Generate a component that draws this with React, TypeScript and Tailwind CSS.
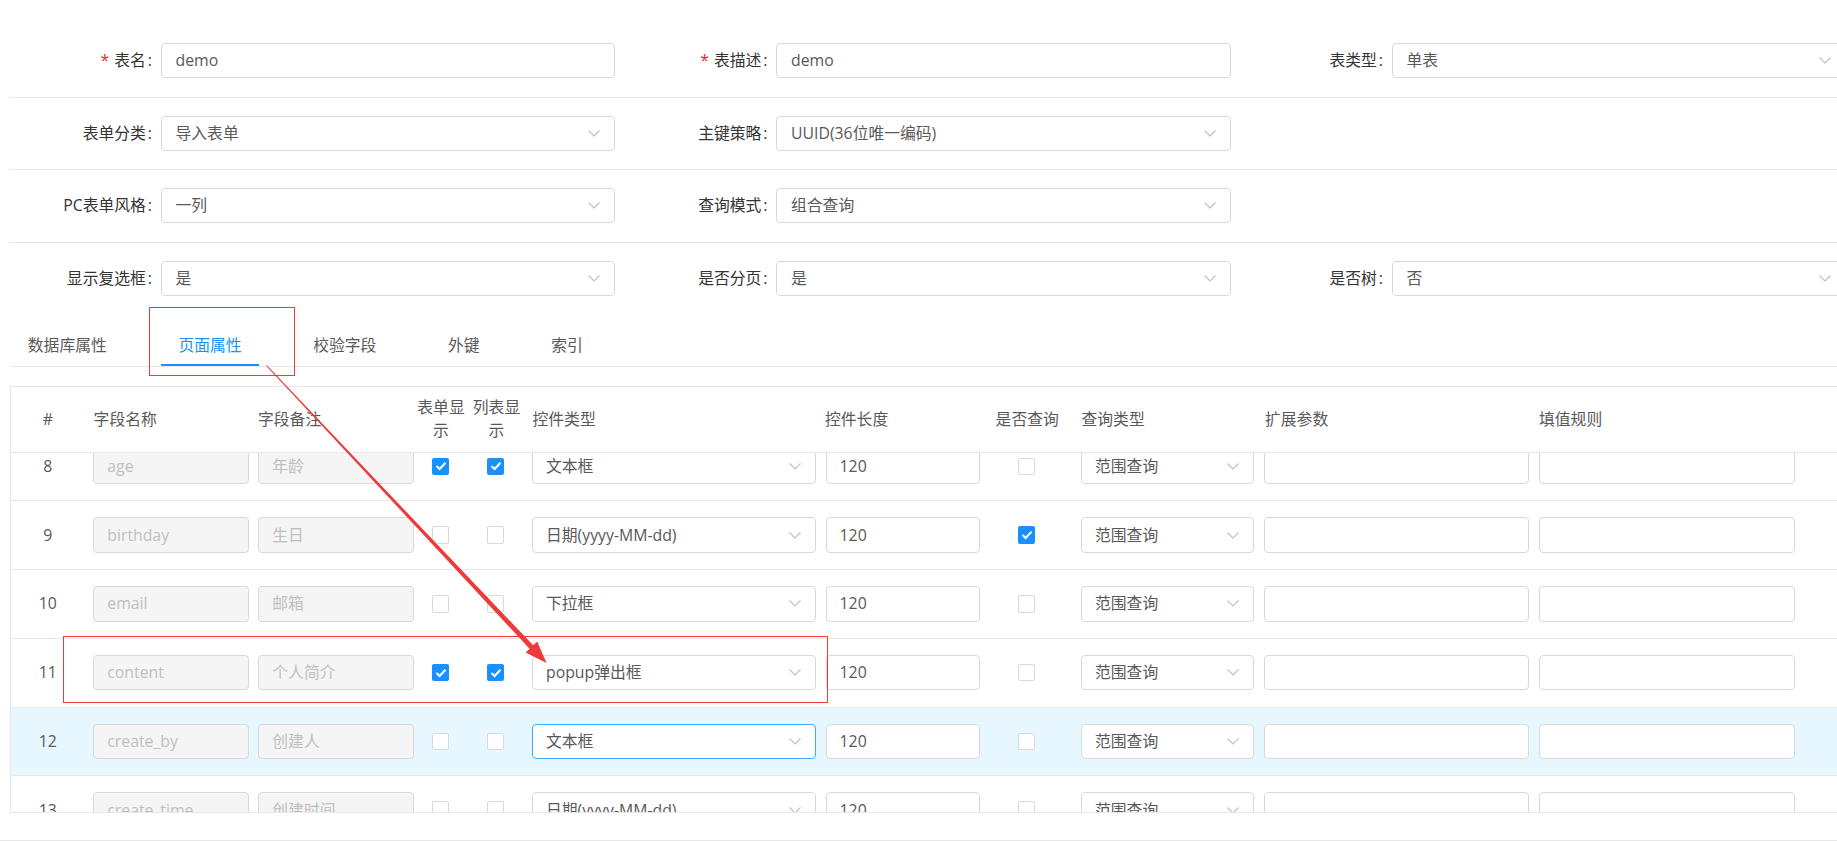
import React from "react";

type Row = {
	no: number;
	name: string;
	remark: string;
	formShow: boolean;
	listShow: boolean;
	ctrl: string;
	len: string;
	query: boolean;
	queryType: string;
	active?: boolean;
};

const rows: Row[] = [
	{ no: 8, name: "age", remark: "年龄", formShow: true, listShow: true, ctrl: "文本框", len: "120", query: false, queryType: "范围查询" },
	{ no: 9, name: "birthday", remark: "生日", formShow: false, listShow: false, ctrl: "日期(yyyy-MM-dd)", len: "120", query: true, queryType: "范围查询" },
	{ no: 10, name: "email", remark: "邮箱", formShow: false, listShow: false, ctrl: "下拉框", len: "120", query: false, queryType: "范围查询" },
	{ no: 11, name: "content", remark: "个人简介", formShow: true, listShow: true, ctrl: "popup弹出框", len: "120", query: false, queryType: "范围查询" },
	{ no: 12, name: "create_by", remark: "创建人", formShow: false, listShow: false, ctrl: "文本框", len: "120", query: false, queryType: "范围查询", active: true },
	{ no: 13, name: "create_time", remark: "创建时间", formShow: false, listShow: false, ctrl: "日期(yyyy-MM-dd)", len: "120", query: false, queryType: "范围查询" },
];

const Chevron = () => (
	<svg width="12" height="7" viewBox="0 0 12 7" className="shrink-0">
		<polyline points="0.5,0.5 6,6 11.5,0.5" fill="none" stroke="#bfbfbf" strokeWidth="1.1" />
	</svg>
);

const Checkbox = ({ checked }: { checked: boolean }) =>
	checked ? (
		<div className="flex h-[17.5px] w-[17.5px] items-center justify-center rounded-[2px] bg-[#1890ff]">
			<svg width="12" height="10" viewBox="0 0 12 10">
				<polyline points="1.5,5 4.6,8 10.5,1.8" fill="none" stroke="#fff" strokeWidth="2" />
			</svg>
		</div>
	) : (
		<div className="h-[17.5px] w-[17.5px] rounded-[2px] border border-[#d9d9d9] bg-white" />
	);

// top form field
const FormItem = ({
	label,
	value,
	required,
	select,
}: {
	label?: string;
	value?: string;
	required?: boolean;
	select?: boolean;
}) => {
	if (!label) return <div className="w-[615.5px] shrink-0" />;
	return (
		<div className="flex w-[615.5px] shrink-0 items-center">
			<label className="w-[143px] shrink-0 text-right text-[#333]">
				{required && <span className="mr-[5px] text-[#f5222d]">*</span>}
				{label}
				<span className="ml-[2px]">:</span>
			</label>
			<div className="ml-[8.5px] flex h-[35.4px] w-[454.5px] items-center rounded-[4px] border border-[#d9d9d9] pl-[14px] pr-[14px] text-[#595959]">
				<span className="flex-1">{value}</span>
				{select && <Chevron />}
			</div>
		</div>
	);
};

const DisabledInput = ({ value }: { value: string }) => (
	<div className="flex h-[35.4px] w-full items-center rounded-[4px] border border-[#d9d9d9] bg-[#f5f5f5] pl-[13px] text-[#bfbfbf]">
		{value}
	</div>
);

const Select = ({ value, focused }: { value: string; focused?: boolean }) => (
	<div
		className={
			focused
				? "flex h-[35.4px] w-full items-center rounded-[4px] border border-[#40a9ff] bg-white pl-[13px] pr-[14px] text-[#595959]"
				: "flex h-[35.4px] w-full items-center rounded-[4px] border border-[#d9d9d9] bg-white pl-[13px] pr-[14px] text-[#595959]"
		}
	>
		<span className="flex-1">{value}</span>
		<Chevron />
	</div>
);

const TextInput = ({ value }: { value?: string }) => (
	<div className="flex h-[35.4px] w-full items-center rounded-[4px] border border-[#d9d9d9] bg-white pl-[13px] text-[#595959]">
		{value}
	</div>
);

const tabs = ["数据库属性", "页面属性", "校验字段", "外键", "索引"];

export default function App() {
	return (
		<div className="relative h-[841px] w-[1837px] overflow-hidden bg-white font-['Open_Sans','Noto_Sans_CJK_SC',sans-serif] text-[15.8px] leading-[1.45]">
			{/* Form */}
			<div className="ml-[9px] w-[1860px] pt-[25px]">
				<div className="flex h-[72.5px] items-center border-b border-[#e8e8e8]">
					<FormItem label="表名" value="demo" required />
					<FormItem label="表描述" value="demo" required />
					<FormItem label="表类型" value="单表" select />
				</div>
				<div className="flex h-[72.5px] items-center border-b border-[#e8e8e8]">
					<FormItem label="表单分类" value="导入表单" select />
					<FormItem label="主键策略" value="UUID(36位唯一编码)" select />
					<FormItem />
				</div>
				<div className="flex h-[72.5px] items-center border-b border-[#e8e8e8]">
					<FormItem label="PC表单风格" value="一列" select />
					<FormItem label="查询模式" value="组合查询" select />
					<FormItem />
				</div>
				<div className="flex h-[72px] items-center">
					<FormItem label="显示复选框" value="是" select />
					<FormItem label="是否分页" value="是" select />
					<FormItem label="是否树" value="否" select />
				</div>
			</div>

			{/* Tabs */}
			<div className="ml-[10px] flex h-[52px] border-b border-[#e8e8e8] pt-[10px]">
				{tabs.map((t, i) => (
					<div
						key={t}
						className={
							i === 1
								? "relative mr-[36px] flex h-full items-center px-[17.8px] text-[#1890ff]"
								: "relative mr-[36px] flex h-full items-center px-[17.8px] text-[#595959]"
						}
					>
						{t}
						{i === 1 && <div className="absolute bottom-0 left-0 right-0 h-[2px] bg-[#1890ff]" />}
					</div>
				))}
			</div>

			{/* Table */}
			<div className="ml-[10px] mt-[19px] w-[1860px] border-l border-t border-[#e8e8e8]">
				<div className="flex h-[66px] items-center border-b border-[#e8e8e8] leading-[22.7px] text-[#595959]">
					<div className="w-[73.6px] shrink-0 text-center">#</div>
					<div className="w-[168.4px] shrink-0 pl-[9px]">字段名称</div>
					<div className="w-[162px] shrink-0 pl-[5px]">字段备注</div>
					<div className="w-[56px] shrink-0 pr-[4px] text-center">表单显示</div>
					<div className="w-[56px] shrink-0 pr-[5px] text-center">列表显示</div>
					<div className="w-[294px] shrink-0 pl-[5.5px]">控件类型</div>
					<div className="w-[164px] shrink-0 pl-[4px]">控件长度</div>
					<div className="w-[91px] shrink-0 pl-[10.6px]">是否查询</div>
					<div className="w-[183.5px] shrink-0 pl-[5.5px]">查询类型</div>
					<div className="w-[274.5px] shrink-0 pl-[5.5px]">扩展参数</div>
					<div className="w-[300px] shrink-0 pl-[5px]">填值规则</div>
				</div>
				<div className="h-[360px] overflow-hidden border-b border-[#e8e8e8]">
					<div className="-mt-[20px]">
						{rows.map((r) => (
							<div
								key={r.no}
								className={
									r.active
										? "flex h-[68.75px] items-center border-b border-[#e8e8e8] bg-[#e6f7ff]"
										: "flex h-[68.75px] items-center border-b border-[#e8e8e8]"
								}
							>
								<div className="w-[73.6px] shrink-0 text-center text-[#595959]">{r.no}</div>
								<div className="w-[168.4px] shrink-0 pl-[8.7px] pr-[4.3px]">
									<DisabledInput value={r.name} />
								</div>
								<div className="w-[162px] shrink-0 pl-[5.3px] pr-[1.4px]">
									<DisabledInput value={r.remark} />
								</div>
								<div className="w-[56px] shrink-0 pl-[17px]">
									<Checkbox checked={r.formShow} />
								</div>
								<div className="w-[56px] shrink-0 pl-[16px]">
									<Checkbox checked={r.listShow} />
								</div>
								<div className="w-[294px] shrink-0 pl-[5px] pr-[5px]">
									<Select value={r.ctrl} focused={r.active} />
								</div>
								<div className="w-[164px] shrink-0 pl-[4.6px] pr-[4.8px]">
									<TextInput value={r.len} />
								</div>
								<div className="w-[91px] shrink-0 pl-[33px]">
									<Checkbox checked={r.query} />
								</div>
								<div className="w-[183.5px] shrink-0 pl-[5px] pr-[5px]">
									<Select value={r.queryType} />
								</div>
								<div className="w-[274.5px] shrink-0 pl-[5px] pr-[5px]">
									<TextInput />
								</div>
								<div className="w-[266px] shrink-0 pl-[5px] pr-[5px]">
									<TextInput />
								</div>
							</div>
						))}
					</div>
				</div>
			</div>

			{/* footer divider */}
			<div className="mt-[27px] border-t border-[#e8e8e8]" />

			{/* annotation marks */}
			<div className="absolute left-[149.3px] top-[307px] h-[69px] w-[145.4px] border border-[#ee3a3a]" />
			<div className="absolute left-[63.4px] top-[636px] h-[67.3px] w-[764.6px] border border-[#ee3a3a]" />
			<svg className="pointer-events-none absolute left-0 top-0" width="1837" height="841">
				<polygon
					points="266.1,365.8 529.6,648.7 525.6,652.5 546.5,663 537.2,641.5 533.2,645.3 266.9,365.2"
					fill="#ee3a3a"
				/>
			</svg>
		</div>
	);
}
